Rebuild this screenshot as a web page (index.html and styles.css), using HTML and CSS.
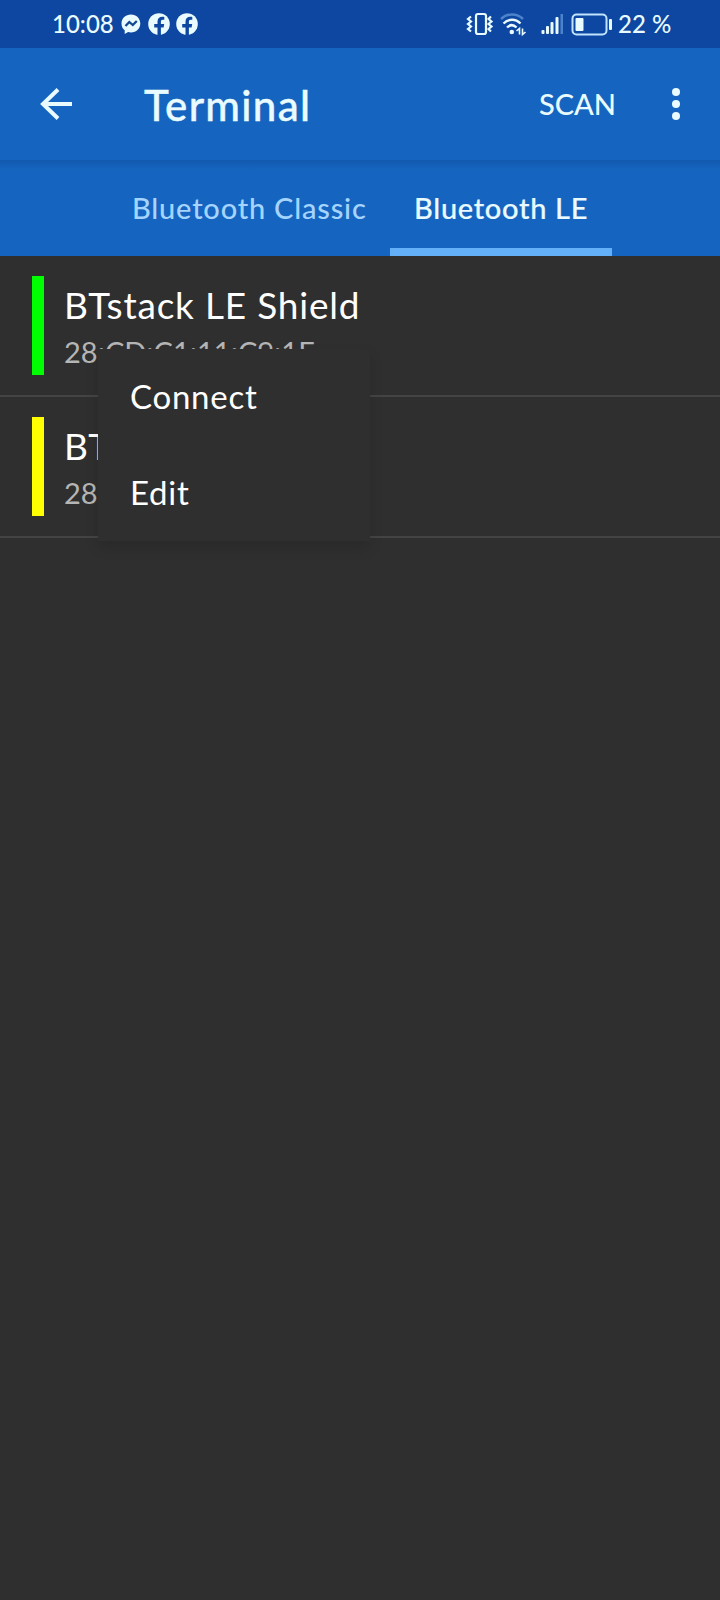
FILE: index.html
```html
<!DOCTYPE html>
<html lang="en">
<head>
<meta charset="utf-8">
<title>Terminal</title>
<link rel="stylesheet" href="styles.css">
</head>
<body>
<div class="status">
  <span class="clock">10:08</span>
  <svg class="notifications" width="78" height="26" viewBox="0 0 78 26">
    <path fill="#e9fbff" d="M10 3.500c-5.400 0-9.500 3.800-9.500 9 0 2.900 1.200 5.200 3.200 6.800v3.600l3.400-1.900c.9.300 1.900.4 2.900.4 5.400 0 9.300-3.800 9.300-8.900s-3.900-9-9.300-9z"/>
    <path fill="none" stroke="#12488f" stroke-width="2.300" d="M4.500 15l3.800-4 3.500 3 4-4"/>
    <g id="fb">
      <circle cx="38" cy="13" r="10.800" fill="#e9fbff"/>
      <path fill="#0d47a1" d="M36.500 24v-7.500h-3.300v-3.400h3.300V10.800c0-3.200 1.900-5 4.800-5 .9 0 2 .2 2 .2v2.800h-1.400c-1.500 0-2 .9-2 1.900v2.400h3.300l-.6 3.400h-2.700V24z"/>
    </g>
    <use href="#fb" x="28"/>
  </svg>
  <svg class="system" width="148" height="28" viewBox="0 0 148 28">
    <g fill="none" stroke="#e9fbff" stroke-width="2.200">
      <rect x="10" y="4" width="10" height="20" rx="2"/>
      <path d="M5 6.500L2 9l3 2.500L2 14l3 2.500L2 19l3 2.500M25 6.500L22.500 9l3 2.500-3 2.500 3 2.500-3 2.500 2.500 2.500"/>
      <path stroke="#4c83ca" stroke-width="2.500" d="M35 9c6-6 16-6 22 0"/>
      <path stroke-width="2.400" d="M37.500 13.500c5-5 12-5 17 0M41 17.500c3-3 6.500-3 9.500 0"/>
    </g>
    <circle cx="45.800" cy="22" r="2.300" fill="#e9fbff"/>
    <path stroke="#e9fbff" stroke-width="1.600" fill="none" d="M50.500 21l3-2.500v6M56.500 18.500v6l3-2.500"/>
    <g fill="#e9fbff">
      <rect x="75.500" y="20" width="3" height="4" rx="1"/>
      <rect x="80" y="16" width="3" height="8" rx="1"/>
      <rect x="84.500" y="12" width="3" height="12" rx="1"/>
      <rect x="89.500" y="7" width="3" height="17" rx="1"/>
      <rect x="94.500" y="4" width="2.500" height="20" fill="#4c83ca"/>
      <rect x="109.500" y="8" width="8" height="13" rx="1"/>
      <rect x="143" y="9" width="3" height="11" rx="1"/>
    </g>
    <rect x="106.500" y="4.500" width="34" height="20" rx="4" fill="none" stroke="#c0e3ff" stroke-width="2"/>
  </svg>
  <span class="battery">22 %</span>
</div>
<header class="appbar">
  <svg class="back" width="34" height="34" viewBox="0 0 34 34" fill="none" stroke="#e9fbff" stroke-width="4">
    <path d="M32 17H3M18 2.500L3 17l15 14.500"/>
  </svg>
  <h1 class="heading">Terminal</h1>
  <span class="scan">SCAN</span>
  <svg class="more" width="8" height="34" viewBox="0 0 8 34" fill="#e9fbff">
    <circle cx="4" cy="5" r="4"/><circle cx="4" cy="17" r="4"/><circle cx="4" cy="29" r="4"/>
  </svg>
</header>
<nav class="tabs">
  <div class="tab classic">Bluetooth Classic</div>
  <div class="tab le">Bluetooth LE</div>
</nav>
<main class="devices">
  <div class="device">
    <div class="mark green"></div>
    <div class="info"><div class="name">BTstack LE Shield</div><div class="address">28:CD:C1:11:C9:1F</div></div>
  </div>
  <div class="device">
    <div class="mark yellow"></div>
    <div class="info"><div class="name">BT</div><div class="address">28</div></div>
  </div>
  <div class="menu">
    <div class="item connect">Connect</div>
    <div class="item edit">Edit</div>
  </div>
</main>
</body>
</html>
```
FILE: styles.css
```css
* { box-sizing: border-box; }
body {
  margin: 0;
  width: 720px;
  height: 1600px;
  overflow: hidden;
  display: flex;
  flex-direction: column;
  background: #2f2f2f;
  color: #fff;
  font-family: Lato, "Noto Sans", sans-serif;
  white-space: nowrap;
}
.status {
  height: 48px;
  flex: none;
  display: flex;
  align-items: center;
  padding-left: 52px;
  background: #0d47a1;
  color: #e9fbff;
  font-size: 24px;
  font-weight: 500;
}
.clock { width: 69px; padding-bottom: 1px; }
.system { margin-left: 267px; }
.battery { margin-left: 4px; padding-bottom: 1px; }
.appbar {
  height: 112px;
  flex: none;
  display: flex;
  align-items: center;
  padding: 0 40px;
  background: #1565c0;
  color: #e9fbff;
}
.heading {
  width: 395px;
  margin: 1px 0 0 70px;
  font-size: 42px;
  line-height: 50px;
  font-weight: 500;
  letter-spacing: 1.3px;
  -webkit-text-stroke: .4px currentColor;
}
.scan {
  width: 133px;
  padding-bottom: 1px;
  font-size: 29px;
  font-weight: 500;
}
.tabs {
  height: 96px;
  flex: none;
  display: flex;
  padding-left: 108px;
  background: linear-gradient(#1259b0, #1565c0 10px);
}
.tab {
  padding: 30px 0 0 24px;
  font-size: 29px;
  line-height: 35px;
  font-weight: 500;
  letter-spacing: .8px;
}
.classic { width: 282px; color: #a5d4ff; }
.le {
  width: 222px;
  color: #e9fbff;
  letter-spacing: .7px;
  border-bottom: 8px solid #64b0f8;
  -webkit-text-stroke: .2px currentColor;
}
.devices { position: relative; flex: 1; }
.device {
  height: 141px;
  display: flex;
  padding: 20px 0 0 32px;
  border-bottom: 2px solid #444;
}
.mark { width: 12px; height: 99px; }
.green { background: #0f0; }
.yellow { background: #ff0; }
.info { padding-left: 20px; }
.name { padding-top: 6px; font-size: 37px; line-height: 46px; letter-spacing: .8px; }
.address { font-size: 29px; line-height: 40px; padding-top: 4px; color: #b5b5b5; }
.menu {
  position: absolute;
  left: 98px;
  top: 93px;
  width: 272px;
  height: 192px;
  background: #2f2f2f;
  box-shadow: 0 7px 13px rgba(0, 0, 0, .12);
}
.item { height: 96px; padding-left: 32px; font-size: 33px; line-height: 94px; letter-spacing: .75px; }
```
